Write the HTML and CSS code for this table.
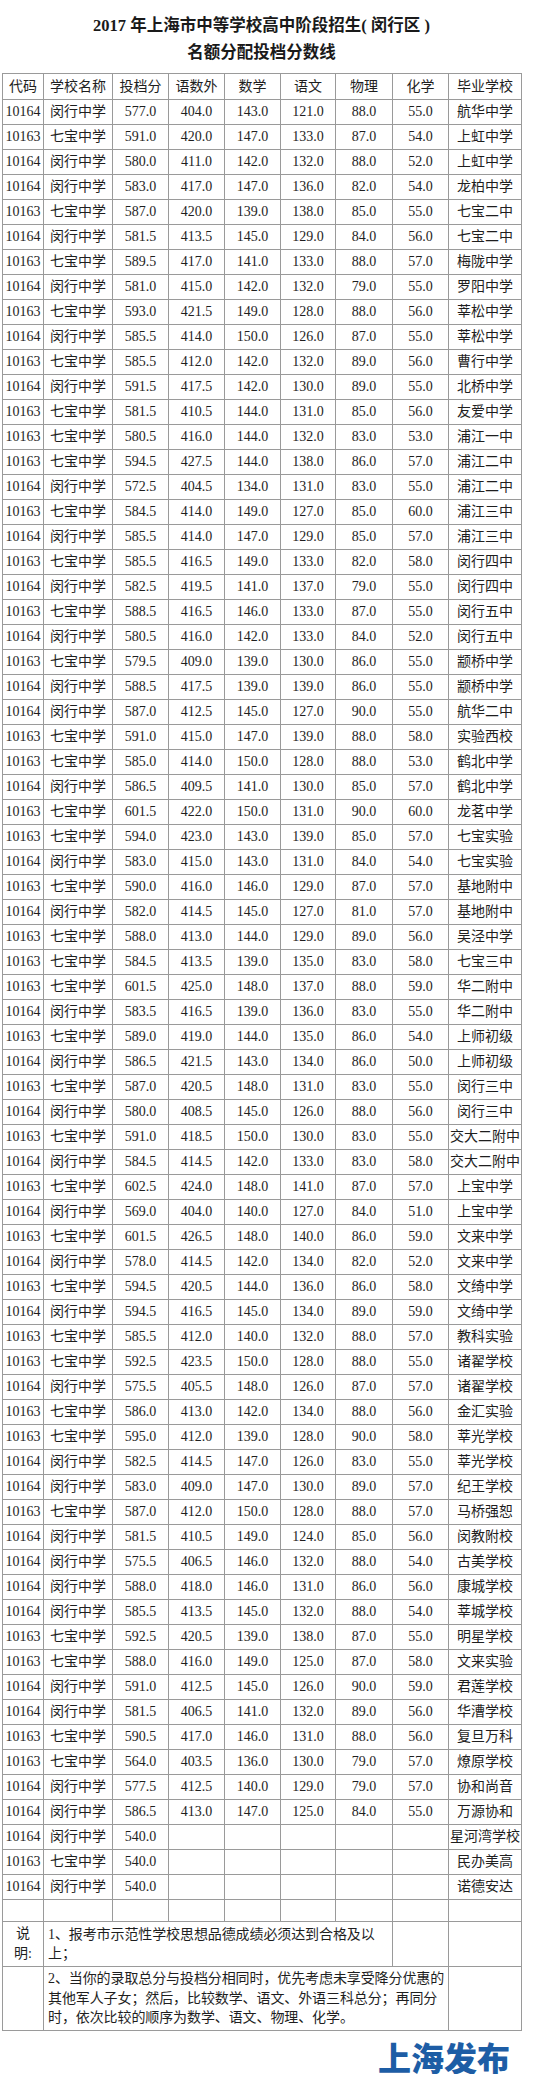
FILE: index.html
```html
<!DOCTYPE html>
<html lang="zh-CN">
<head>
<meta charset="utf-8">
<title>2017年上海市中等学校高中阶段招生（闵行区）名额分配投档分数线</title>
<link rel="stylesheet" href="styles.css">
</head>
<body>
<div class="page">
  <h1 class="title">2017 年上海市中等学校高中阶段招生( 闵行区 )<br>名额分配投档分数线</h1>
  <table class="scores">
    <colgroup>
      <col class="c1"><col class="c2"><col class="c3"><col class="c4"><col class="c5"><col class="c6"><col class="c7"><col class="c8"><col class="c9">
    </colgroup>
    <thead>
      <tr><th>代码</th><th>学校名称</th><th>投档分</th><th>语数外</th><th>数学</th><th>语文</th><th>物理</th><th>化学</th><th>毕业学校</th></tr>
    </thead>
    <tbody>
      <tr><td>10164</td><td>闵行中学</td><td>577.0</td><td>404.0</td><td>143.0</td><td>121.0</td><td>88.0</td><td>55.0</td><td>航华中学</td></tr>
      <tr><td>10163</td><td>七宝中学</td><td>591.0</td><td>420.0</td><td>147.0</td><td>133.0</td><td>87.0</td><td>54.0</td><td>上虹中学</td></tr>
      <tr><td>10164</td><td>闵行中学</td><td>580.0</td><td>411.0</td><td>142.0</td><td>132.0</td><td>88.0</td><td>52.0</td><td>上虹中学</td></tr>
      <tr><td>10164</td><td>闵行中学</td><td>583.0</td><td>417.0</td><td>147.0</td><td>136.0</td><td>82.0</td><td>54.0</td><td>龙柏中学</td></tr>
      <tr><td>10163</td><td>七宝中学</td><td>587.0</td><td>420.0</td><td>139.0</td><td>138.0</td><td>85.0</td><td>55.0</td><td>七宝二中</td></tr>
      <tr><td>10164</td><td>闵行中学</td><td>581.5</td><td>413.5</td><td>145.0</td><td>129.0</td><td>84.0</td><td>56.0</td><td>七宝二中</td></tr>
      <tr><td>10163</td><td>七宝中学</td><td>589.5</td><td>417.0</td><td>141.0</td><td>133.0</td><td>88.0</td><td>57.0</td><td>梅陇中学</td></tr>
      <tr><td>10164</td><td>闵行中学</td><td>581.0</td><td>415.0</td><td>142.0</td><td>132.0</td><td>79.0</td><td>55.0</td><td>罗阳中学</td></tr>
      <tr><td>10163</td><td>七宝中学</td><td>593.0</td><td>421.5</td><td>149.0</td><td>128.0</td><td>88.0</td><td>56.0</td><td>莘松中学</td></tr>
      <tr><td>10164</td><td>闵行中学</td><td>585.5</td><td>414.0</td><td>150.0</td><td>126.0</td><td>87.0</td><td>55.0</td><td>莘松中学</td></tr>
      <tr><td>10163</td><td>七宝中学</td><td>585.5</td><td>412.0</td><td>142.0</td><td>132.0</td><td>89.0</td><td>56.0</td><td>曹行中学</td></tr>
      <tr><td>10164</td><td>闵行中学</td><td>591.5</td><td>417.5</td><td>142.0</td><td>130.0</td><td>89.0</td><td>55.0</td><td>北桥中学</td></tr>
      <tr><td>10163</td><td>七宝中学</td><td>581.5</td><td>410.5</td><td>144.0</td><td>131.0</td><td>85.0</td><td>56.0</td><td>友爱中学</td></tr>
      <tr><td>10163</td><td>七宝中学</td><td>580.5</td><td>416.0</td><td>144.0</td><td>132.0</td><td>83.0</td><td>53.0</td><td>浦江一中</td></tr>
      <tr><td>10163</td><td>七宝中学</td><td>594.5</td><td>427.5</td><td>144.0</td><td>138.0</td><td>86.0</td><td>57.0</td><td>浦江二中</td></tr>
      <tr><td>10164</td><td>闵行中学</td><td>572.5</td><td>404.5</td><td>134.0</td><td>131.0</td><td>83.0</td><td>55.0</td><td>浦江二中</td></tr>
      <tr><td>10163</td><td>七宝中学</td><td>584.5</td><td>414.0</td><td>149.0</td><td>127.0</td><td>85.0</td><td>60.0</td><td>浦江三中</td></tr>
      <tr><td>10164</td><td>闵行中学</td><td>585.5</td><td>414.0</td><td>147.0</td><td>129.0</td><td>85.0</td><td>57.0</td><td>浦江三中</td></tr>
      <tr><td>10163</td><td>七宝中学</td><td>585.5</td><td>416.5</td><td>149.0</td><td>133.0</td><td>82.0</td><td>58.0</td><td>闵行四中</td></tr>
      <tr><td>10164</td><td>闵行中学</td><td>582.5</td><td>419.5</td><td>141.0</td><td>137.0</td><td>79.0</td><td>55.0</td><td>闵行四中</td></tr>
      <tr><td>10163</td><td>七宝中学</td><td>588.5</td><td>416.5</td><td>146.0</td><td>133.0</td><td>87.0</td><td>55.0</td><td>闵行五中</td></tr>
      <tr><td>10164</td><td>闵行中学</td><td>580.5</td><td>416.0</td><td>142.0</td><td>133.0</td><td>84.0</td><td>52.0</td><td>闵行五中</td></tr>
      <tr><td>10163</td><td>七宝中学</td><td>579.5</td><td>409.0</td><td>139.0</td><td>130.0</td><td>86.0</td><td>55.0</td><td>颛桥中学</td></tr>
      <tr><td>10164</td><td>闵行中学</td><td>588.5</td><td>417.5</td><td>139.0</td><td>139.0</td><td>86.0</td><td>55.0</td><td>颛桥中学</td></tr>
      <tr><td>10164</td><td>闵行中学</td><td>587.0</td><td>412.5</td><td>145.0</td><td>127.0</td><td>90.0</td><td>55.0</td><td>航华二中</td></tr>
      <tr><td>10163</td><td>七宝中学</td><td>591.0</td><td>415.0</td><td>147.0</td><td>139.0</td><td>88.0</td><td>58.0</td><td>实验西校</td></tr>
      <tr><td>10163</td><td>七宝中学</td><td>585.0</td><td>414.0</td><td>150.0</td><td>128.0</td><td>88.0</td><td>53.0</td><td>鹤北中学</td></tr>
      <tr><td>10164</td><td>闵行中学</td><td>586.5</td><td>409.5</td><td>141.0</td><td>130.0</td><td>85.0</td><td>57.0</td><td>鹤北中学</td></tr>
      <tr><td>10163</td><td>七宝中学</td><td>601.5</td><td>422.0</td><td>150.0</td><td>131.0</td><td>90.0</td><td>60.0</td><td>龙茗中学</td></tr>
      <tr><td>10163</td><td>七宝中学</td><td>594.0</td><td>423.0</td><td>143.0</td><td>139.0</td><td>85.0</td><td>57.0</td><td>七宝实验</td></tr>
      <tr><td>10164</td><td>闵行中学</td><td>583.0</td><td>415.0</td><td>143.0</td><td>131.0</td><td>84.0</td><td>54.0</td><td>七宝实验</td></tr>
      <tr><td>10163</td><td>七宝中学</td><td>590.0</td><td>416.0</td><td>146.0</td><td>129.0</td><td>87.0</td><td>57.0</td><td>基地附中</td></tr>
      <tr><td>10164</td><td>闵行中学</td><td>582.0</td><td>414.5</td><td>145.0</td><td>127.0</td><td>81.0</td><td>57.0</td><td>基地附中</td></tr>
      <tr><td>10163</td><td>七宝中学</td><td>588.0</td><td>413.0</td><td>144.0</td><td>129.0</td><td>89.0</td><td>56.0</td><td>吴泾中学</td></tr>
      <tr><td>10163</td><td>七宝中学</td><td>584.5</td><td>413.5</td><td>139.0</td><td>135.0</td><td>83.0</td><td>58.0</td><td>七宝三中</td></tr>
      <tr><td>10163</td><td>七宝中学</td><td>601.5</td><td>425.0</td><td>148.0</td><td>137.0</td><td>88.0</td><td>59.0</td><td>华二附中</td></tr>
      <tr><td>10164</td><td>闵行中学</td><td>583.5</td><td>416.5</td><td>139.0</td><td>136.0</td><td>83.0</td><td>55.0</td><td>华二附中</td></tr>
      <tr><td>10163</td><td>七宝中学</td><td>589.0</td><td>419.0</td><td>144.0</td><td>135.0</td><td>86.0</td><td>54.0</td><td>上师初级</td></tr>
      <tr><td>10164</td><td>闵行中学</td><td>586.5</td><td>421.5</td><td>143.0</td><td>134.0</td><td>86.0</td><td>50.0</td><td>上师初级</td></tr>
      <tr><td>10163</td><td>七宝中学</td><td>587.0</td><td>420.5</td><td>148.0</td><td>131.0</td><td>83.0</td><td>55.0</td><td>闵行三中</td></tr>
      <tr><td>10164</td><td>闵行中学</td><td>580.0</td><td>408.5</td><td>145.0</td><td>126.0</td><td>88.0</td><td>56.0</td><td>闵行三中</td></tr>
      <tr><td>10163</td><td>七宝中学</td><td>591.0</td><td>418.5</td><td>150.0</td><td>130.0</td><td>83.0</td><td>55.0</td><td>交大二附中</td></tr>
      <tr><td>10164</td><td>闵行中学</td><td>584.5</td><td>414.5</td><td>142.0</td><td>133.0</td><td>83.0</td><td>58.0</td><td>交大二附中</td></tr>
      <tr><td>10163</td><td>七宝中学</td><td>602.5</td><td>424.0</td><td>148.0</td><td>141.0</td><td>87.0</td><td>57.0</td><td>上宝中学</td></tr>
      <tr><td>10164</td><td>闵行中学</td><td>569.0</td><td>404.0</td><td>140.0</td><td>127.0</td><td>84.0</td><td>51.0</td><td>上宝中学</td></tr>
      <tr><td>10163</td><td>七宝中学</td><td>601.5</td><td>426.5</td><td>148.0</td><td>140.0</td><td>86.0</td><td>59.0</td><td>文来中学</td></tr>
      <tr><td>10164</td><td>闵行中学</td><td>578.0</td><td>414.5</td><td>142.0</td><td>134.0</td><td>82.0</td><td>52.0</td><td>文来中学</td></tr>
      <tr><td>10163</td><td>七宝中学</td><td>594.5</td><td>420.5</td><td>144.0</td><td>136.0</td><td>86.0</td><td>58.0</td><td>文绮中学</td></tr>
      <tr><td>10164</td><td>闵行中学</td><td>594.5</td><td>416.5</td><td>145.0</td><td>134.0</td><td>89.0</td><td>59.0</td><td>文绮中学</td></tr>
      <tr><td>10163</td><td>七宝中学</td><td>585.5</td><td>412.0</td><td>140.0</td><td>132.0</td><td>88.0</td><td>57.0</td><td>教科实验</td></tr>
      <tr><td>10163</td><td>七宝中学</td><td>592.5</td><td>423.5</td><td>150.0</td><td>128.0</td><td>88.0</td><td>55.0</td><td>诸翟学校</td></tr>
      <tr><td>10164</td><td>闵行中学</td><td>575.5</td><td>405.5</td><td>148.0</td><td>126.0</td><td>87.0</td><td>57.0</td><td>诸翟学校</td></tr>
      <tr><td>10163</td><td>七宝中学</td><td>586.0</td><td>413.0</td><td>142.0</td><td>134.0</td><td>88.0</td><td>56.0</td><td>金汇实验</td></tr>
      <tr><td>10163</td><td>七宝中学</td><td>595.0</td><td>412.0</td><td>139.0</td><td>128.0</td><td>90.0</td><td>58.0</td><td>莘光学校</td></tr>
      <tr><td>10164</td><td>闵行中学</td><td>582.5</td><td>414.5</td><td>147.0</td><td>126.0</td><td>83.0</td><td>55.0</td><td>莘光学校</td></tr>
      <tr><td>10164</td><td>闵行中学</td><td>583.0</td><td>409.0</td><td>147.0</td><td>130.0</td><td>89.0</td><td>57.0</td><td>纪王学校</td></tr>
      <tr><td>10163</td><td>七宝中学</td><td>587.0</td><td>412.0</td><td>150.0</td><td>128.0</td><td>88.0</td><td>57.0</td><td>马桥强恕</td></tr>
      <tr><td>10164</td><td>闵行中学</td><td>581.5</td><td>410.5</td><td>149.0</td><td>124.0</td><td>85.0</td><td>56.0</td><td>闵教附校</td></tr>
      <tr><td>10164</td><td>闵行中学</td><td>575.5</td><td>406.5</td><td>146.0</td><td>132.0</td><td>88.0</td><td>54.0</td><td>古美学校</td></tr>
      <tr><td>10164</td><td>闵行中学</td><td>588.0</td><td>418.0</td><td>146.0</td><td>131.0</td><td>86.0</td><td>56.0</td><td>康城学校</td></tr>
      <tr><td>10164</td><td>闵行中学</td><td>585.5</td><td>413.5</td><td>145.0</td><td>132.0</td><td>88.0</td><td>54.0</td><td>莘城学校</td></tr>
      <tr><td>10163</td><td>七宝中学</td><td>592.5</td><td>420.5</td><td>139.0</td><td>138.0</td><td>87.0</td><td>55.0</td><td>明星学校</td></tr>
      <tr><td>10163</td><td>七宝中学</td><td>588.0</td><td>416.0</td><td>149.0</td><td>125.0</td><td>87.0</td><td>58.0</td><td>文来实验</td></tr>
      <tr><td>10164</td><td>闵行中学</td><td>591.0</td><td>412.5</td><td>145.0</td><td>126.0</td><td>90.0</td><td>59.0</td><td>君莲学校</td></tr>
      <tr><td>10164</td><td>闵行中学</td><td>581.5</td><td>406.5</td><td>141.0</td><td>132.0</td><td>89.0</td><td>56.0</td><td>华漕学校</td></tr>
      <tr><td>10163</td><td>七宝中学</td><td>590.5</td><td>417.0</td><td>146.0</td><td>131.0</td><td>88.0</td><td>56.0</td><td>复旦万科</td></tr>
      <tr><td>10163</td><td>七宝中学</td><td>564.0</td><td>403.5</td><td>136.0</td><td>130.0</td><td>79.0</td><td>57.0</td><td>燎原学校</td></tr>
      <tr><td>10164</td><td>闵行中学</td><td>577.5</td><td>412.5</td><td>140.0</td><td>129.0</td><td>79.0</td><td>57.0</td><td>协和尚音</td></tr>
      <tr><td>10164</td><td>闵行中学</td><td>586.5</td><td>413.0</td><td>147.0</td><td>125.0</td><td>84.0</td><td>55.0</td><td>万源协和</td></tr>
      <tr><td>10164</td><td>闵行中学</td><td>540.0</td><td></td><td></td><td></td><td></td><td></td><td>星河湾学校</td></tr>
      <tr><td>10163</td><td>七宝中学</td><td>540.0</td><td></td><td></td><td></td><td></td><td></td><td>民办美高</td></tr>
      <tr><td>10164</td><td>闵行中学</td><td>540.0</td><td></td><td></td><td></td><td></td><td></td><td>诺德安达</td></tr>
      <tr class="blank"><td></td><td></td><td></td><td></td><td></td><td></td><td></td><td></td><td></td></tr>
      <tr class="note1"><td class="lbl">说<br>明:</td><td class="note" colspan="6">1、报考市示范性学校思想品德成绩必须达到合格及以<br>上；</td><td></td><td></td></tr>
      <tr class="note2"><td></td><td class="note" colspan="7">2、当你的录取总分与投档分相同时，优先考虑未享受降分优惠的<br>其他军人子女；然后，比较数学、语文、外语三科总分；再同分<br>时，依次比较的顺序为数学、语文、物理、化学。</td><td></td></tr>
    </tbody>
  </table>
  <div class="logo">上海发布</div>
</div>
</body>
</html>
```
FILE: styles.css
```css
html, body {
  margin: 0;
  padding: 0;
  background: #ffffff;
}

body {
  color: #1e1e1e;
  font-family: "Liberation Serif", "Noto Sans CJK SC", serif;
}

.page {
  width: 519px;
  margin-left: 2px;
}

.title {
  margin: 0 0 7px 0;
  padding-top: 12px;
  text-align: center;
  font-size: 16.5px;
  line-height: 27px;
  font-weight: 700;
  color: #1a1a1a;
}

.scores {
  width: 519px;
  table-layout: fixed;
  border-collapse: collapse;
  font-size: 14px;
}

.c1 { width: 41px; }
.c2 { width: 69px; }
.c3 { width: 56px; }
.c4 { width: 56px; }
.c5 { width: 56px; }
.c6 { width: 55px; }
.c7 { width: 57px; }
.c8 { width: 56px; }
.c9 { width: 73px; }

.scores th,
.scores td {
  border: 1px solid #9a9a9a;
  padding: 0;
  height: 24px;
  text-align: center;
  vertical-align: middle;
  white-space: nowrap;
  font-weight: 400;
  line-height: 18px;
}

.scores th {
  height: 25px;
}

.scores tr.blank td {
  height: 21px;
}

.scores tr.note1 td {
  height: 44px;
}

.scores tr.note2 td {
  height: 63px;
}

.scores td.lbl {
  line-height: 20px;
}

.scores td.note {
  text-align: left;
  padding: 0 0 0 4px;
  line-height: 19.5px;
  letter-spacing: -0.1px;
}

.logo {
  margin-top: 9px;
  padding-right: 11px;
  text-align: right;
  font-family: "Noto Sans CJK SC", sans-serif;
  font-weight: 900;
  font-size: 33px;
  line-height: 34px;
  color: #1d5da5;
}
```
